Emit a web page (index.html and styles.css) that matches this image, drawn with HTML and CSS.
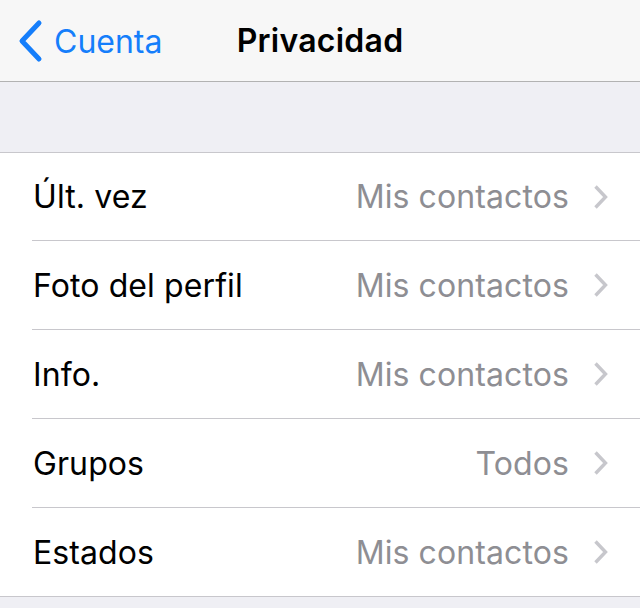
FILE: index.html
```html
<!DOCTYPE html>
<html lang="es">
<head>
  <meta charset="UTF-8">
  <title>Privacidad</title>
  <link rel="stylesheet" href="styles.css">
</head>
<body>
  <header class="nav">
    <a class="back" href="#">
      <svg class="back-icon" width="26" height="44" viewBox="0 0 26 44">
        <polyline points="22,4 5,22 22,40" fill="none" stroke="#157efb" stroke-width="5" stroke-linecap="round" stroke-linejoin="round"/>
      </svg>
      <span>Cuenta</span>
    </a>
    <h1 class="title">Privacidad</h1>
    <div></div>
  </header>

  <div class="spacer"></div>

  <ul class="list">
    <li class="row">
      <div class="row-body">
        <span class="label">Últ. vez</span>
        <span class="value">Mis contactos</span>
        <svg class="chev" width="15" height="26" viewBox="0 0 15 26"><polyline points="2.5,2.5 12.5,13 2.5,23.5" fill="none" stroke="#c7c7cc" stroke-width="3.4"/></svg>
      </div>
    </li>
    <li class="row">
      <div class="row-body">
        <span class="label">Foto del perfil</span>
        <span class="value">Mis contactos</span>
        <svg class="chev" width="15" height="26" viewBox="0 0 15 26"><polyline points="2.5,2.5 12.5,13 2.5,23.5" fill="none" stroke="#c7c7cc" stroke-width="3.4"/></svg>
      </div>
    </li>
    <li class="row">
      <div class="row-body">
        <span class="label">Info.</span>
        <span class="value">Mis contactos</span>
        <svg class="chev" width="15" height="26" viewBox="0 0 15 26"><polyline points="2.5,2.5 12.5,13 2.5,23.5" fill="none" stroke="#c7c7cc" stroke-width="3.4"/></svg>
      </div>
    </li>
    <li class="row">
      <div class="row-body">
        <span class="label">Grupos</span>
        <span class="value">Todos</span>
        <svg class="chev" width="15" height="26" viewBox="0 0 15 26"><polyline points="2.5,2.5 12.5,13 2.5,23.5" fill="none" stroke="#c7c7cc" stroke-width="3.4"/></svg>
      </div>
    </li>
    <li class="row">
      <div class="row-body">
        <span class="label">Estados</span>
        <span class="value">Mis contactos</span>
        <svg class="chev" width="15" height="26" viewBox="0 0 15 26"><polyline points="2.5,2.5 12.5,13 2.5,23.5" fill="none" stroke="#c7c7cc" stroke-width="3.4"/></svg>
      </div>
    </li>
  </ul>
</body>
</html>
```

FILE: styles.css
```css
html, body { margin: 0; padding: 0; }
body { font-family: Inter, "Liberation Sans", Arial, sans-serif; background-color: #efeff4; color: #000; }

.nav { height: 81px; border-bottom: 1px solid #b2b2b2; background-color: #f7f7f7; display: grid; grid-template-columns: 1fr auto 1fr; align-items: center; }
.back { display: flex; align-items: center; gap: 11px; padding-left: 17px; color: #157efb; text-decoration: none; font-size: 32px; margin-top: 1px; }
.back-icon { display: block; }
.title { margin: 0; font-size: 32px; font-weight: 600; letter-spacing: 0.25px; }

.spacer { height: 70px; }

.list { list-style: none; margin: 0; padding: 0; background-color: #fff; border-top: 1px solid #c8c7cc; border-bottom: 1px solid #c8c7cc; }
.row { padding-left: 32px; }
.row-body { height: 88px; display: flex; align-items: center; padding-right: 32px; border-bottom: 1px solid #c8c7cc; font-size: 32px; letter-spacing: 0.1px; }
.row:first-child .row-body { height: 87px; }
.row:last-child .row-body { border-bottom: none; }
.label { flex: 1; padding-left: 1px; }
.value { color: #8e8e93; margin-right: 24px; }
.chev { display: block; }
```
